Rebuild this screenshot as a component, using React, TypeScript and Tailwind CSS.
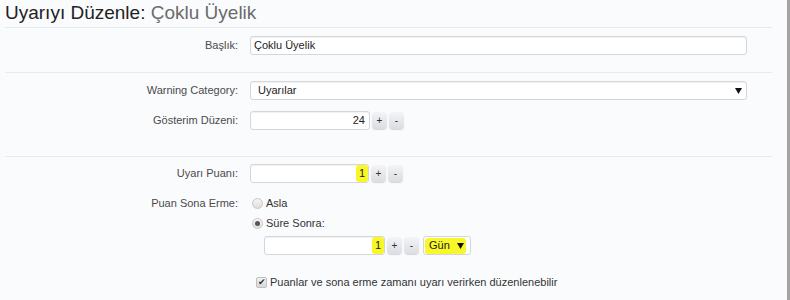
import React from 'react'

const font = { fontFamily: '"Liberation Sans", Arial, sans-serif' }

function Label({ children }: { children: React.ReactNode }) {
  return (
    <div className="w-[245px] shrink-0 pr-[12px] text-right text-[11px] text-[#4a4a4a]">
      {children}
    </div>
  )
}

function Arrow() {
  return (
    <svg width="7" height="6" viewBox="0 0 7 6" className="shrink-0">
      <path d="M0 0 H7 L3.5 6 Z" fill="#111" />
    </svg>
  )
}

function SpinButton({ sign }: { sign: string }) {
  return (
    <div className="flex h-[17px] w-[15px] items-center justify-center rounded-[4px] bg-gradient-to-b from-[#f4f4f6] to-[#dcdde2] text-[10px] text-[#333] shadow-[0_1px_1px_rgba(0,0,0,0.15)]">
      {sign}
    </div>
  )
}

function Spinner({ value, marked, width }: { value: string; marked?: boolean; width: string }) {
  return (
    <div className="flex items-center gap-[2px]">
      <div
        className={`flex h-[19px] ${width} items-center justify-end rounded-[3px] border border-[#d4d6da] bg-white text-[11px] text-[#222] shadow-[inset_0_1px_1px_rgba(0,0,0,0.06)] ${marked ? 'pr-0' : 'pr-[4px]'}`}
      >
        {marked ? (
          <span className="flex h-[17px] w-[12px] items-center justify-center rounded-[3px] bg-[#f7f72a]">{value}</span>
        ) : (
          value
        )}
      </div>
      <SpinButton sign="+" />
      <SpinButton sign="-" />
    </div>
  )
}

function Radio({ checked }: { checked?: boolean }) {
  return (
    <span className="mr-[3px] flex h-[11px] w-[11px] items-center justify-center rounded-full border border-[#c4c6ca] bg-gradient-to-b from-[#f6f6f6] to-[#dedede]">
      {checked && <span className="h-[5px] w-[5px] rounded-full bg-[#555]" />}
    </span>
  )
}

export default function App() {
  return (
    <div className="h-[300px] w-[790px] overflow-hidden border-r-[3px] border-[#a3a3a3] bg-[#fafbfd]" style={font}>
      <div className="ml-[5px] w-[767px]">
        {/* title */}
        <div className="h-[28px] border-b border-[#e4ecf0] text-[19px] leading-[26px]">
          <span className="text-[#222]">Uyarıyı Düzenle: </span>
          <span className="text-[#6b6b6b]">Çoklu Üyelik</span>
        </div>

        {/* section 1 */}
        <div className="border-b border-[#e2eef2] pt-[8px] pb-[17px]">
          <div className="flex h-[19px] items-center">
            <Label>Başlık:</Label>
            <div className="flex h-[19px] w-[497px] items-center rounded-[3px] border border-[#d4d6da] bg-white pl-[3px] text-[11px] text-[#222] shadow-[inset_0_1px_1px_rgba(0,0,0,0.06)]">
              Çoklu Üyelik
            </div>
          </div>
        </div>

        {/* section 2 */}
        <div className="flex flex-col gap-[11px] border-b border-[#e2eef2] pt-[8px] pb-[26px]">
          <div className="flex h-[19px] items-center">
            <Label>Warning Category:</Label>
            <div className="flex h-[19px] w-[497px] items-center justify-between rounded-[3px] border border-[#d4d6da] bg-white pr-[4px] pl-[7px] text-[11px] text-[#222] shadow-[inset_0_1px_1px_rgba(0,0,0,0.06)]">
              <span>Uyarılar</span>
              <Arrow />
            </div>
          </div>
          <div className="flex h-[19px] items-center">
            <Label>Gösterim Düzeni:</Label>
            <Spinner value="24" width="w-[120px]" />
          </div>
        </div>

        {/* section 3 */}
        <div className="flex flex-col pt-[7px]">
          <div className="flex h-[19px] items-center">
            <Label>Uyarı Puanı:</Label>
            <Spinner value="1" marked width="w-[119px]" />
          </div>
          <div className="mt-[13px] flex h-[14px] items-center">
            <Label>Puan Sona Erme:</Label>
            <div className="flex items-center pl-[2px] text-[11px] text-[#333]">
              <Radio />
              Asla
            </div>
          </div>
          <div className="mt-[6px] flex h-[14px] items-center">
            <div className="w-[245px] shrink-0" />
            <div className="flex items-center pl-[2px] text-[11px] text-[#333]">
              <Radio checked />
              Süre Sonra:
            </div>
          </div>
          <div className="mt-[6px] flex h-[19px] items-center">
            <div className="w-[259px] shrink-0" />
            <Spinner value="1" marked width="w-[121px]" />
            <div className="ml-[4px] flex h-[19px] w-[48px] items-center rounded-[3px] border border-[#d4d6da] bg-white pl-[1px] text-[11px] text-[#222]">
              <div className="flex h-[16px] w-[41px] items-center justify-between rounded-[3px] bg-[#f7f72a] pr-[2px] pl-[4px]">
                <span>Gün</span>
                <Arrow />
              </div>
            </div>
          </div>
          <div className="mt-[20px] flex h-[14px] items-center">
            <div className="w-[251px] shrink-0" />
            <span className="mr-[3px] flex h-[11px] w-[11px] items-center justify-center rounded-[2px] border border-[#bdbfc3] bg-gradient-to-b from-[#f2f2f2] to-[#d8d8d8] text-[9px] leading-none text-[#333]">
              ✔
            </span>
            <span className="text-[11px] text-[#333]">Puanlar ve sona erme zamanı uyarı verirken düzenlenebilir</span>
          </div>
        </div>
      </div>
    </div>
  )
}
